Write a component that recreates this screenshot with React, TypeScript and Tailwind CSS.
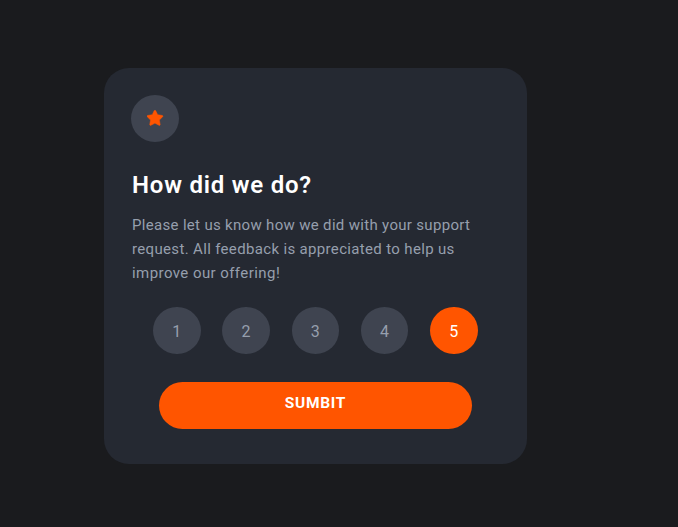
import { useState } from "react";

const ratings = [1, 2, 3, 4, 5];

export default function App() {
  const [selected, setSelected] = useState(5);

  return (
    <main className="h-[527px] w-[678px] overflow-hidden bg-[#1a1b1e] pt-[68px] pl-[104px] font-['Roboto','Liberation_Sans',sans-serif]">
      <section className="flex h-[396px] w-[423px] flex-col rounded-[25px] bg-[#252932] pt-[27px]">
        <div className="ml-[27px] flex h-[47px] w-12 items-center justify-center rounded-[50%] bg-[#3f4450] pb-px">
          <svg width="17" height="16" viewBox="0 0 17 16" className="shrink-0">
            <path
              d="m9.067.43 1.99 4.031c.112.228.33.386.58.422l4.45.647a.772.772 0 0 1 .427 1.316l-3.22 3.138a.773.773 0 0 0-.222.683l.76 4.431a.772.772 0 0 1-1.12.813l-3.98-2.092a.773.773 0 0 0-.718 0l-3.98 2.092a.772.772 0 0 1-1.119-.813l.76-4.431a.77.77 0 0 0-.222-.683L.233 6.846A.772.772 0 0 1 .661 5.53l4.449-.647a.772.772 0 0 0 .58-.422L7.68.43a.774.774 0 0 1 1.387 0Z"
              fill="#ff5500"
              transform="translate(0 0.2) scale(0.95)"
              stroke="#ff5500"
              strokeWidth="0.6"
            />
          </svg>
        </div>
        <h1 className="mt-[27px] ml-7 h-8 text-2xl leading-8 font-semibold tracking-[0.78px] whitespace-nowrap text-white">
          How did we do?
        </h1>
        <p className="mt-3 ml-7 text-[15px] leading-6 whitespace-nowrap text-[#969fad]">
          <span className="block tracking-[0.32px]">Please let us know how we did with your support</span>
          <span className="block tracking-[0.34px]">request. All feedback is appreciated to help us</span>
          <span className="block tracking-[0.43px]">improve our offering!</span>
        </p>
        <div className="mt-[22px] ml-[49px] flex w-[324.5px] justify-between">
          {ratings.map((rating) => (
            <button
              key={rating}
              onClick={() => setSelected(rating)}
              className={`h-[47px] w-[47.5px] rounded-[50%] pt-[3px] text-base ${
                rating === selected ? "bg-[#ff5500] text-white" : "bg-[#3f4450] text-[#969fad]"
              }`}
            >
              {rating}
            </button>
          ))}
        </div>
        <button className="mt-7 ml-[55px] h-[47px] w-[313px] rounded-full bg-[#ff5500] pb-[3px] text-[15.5px] font-bold tracking-[0.7px] text-white">
          SUMBIT
        </button>
      </section>
    </main>
  );
}
